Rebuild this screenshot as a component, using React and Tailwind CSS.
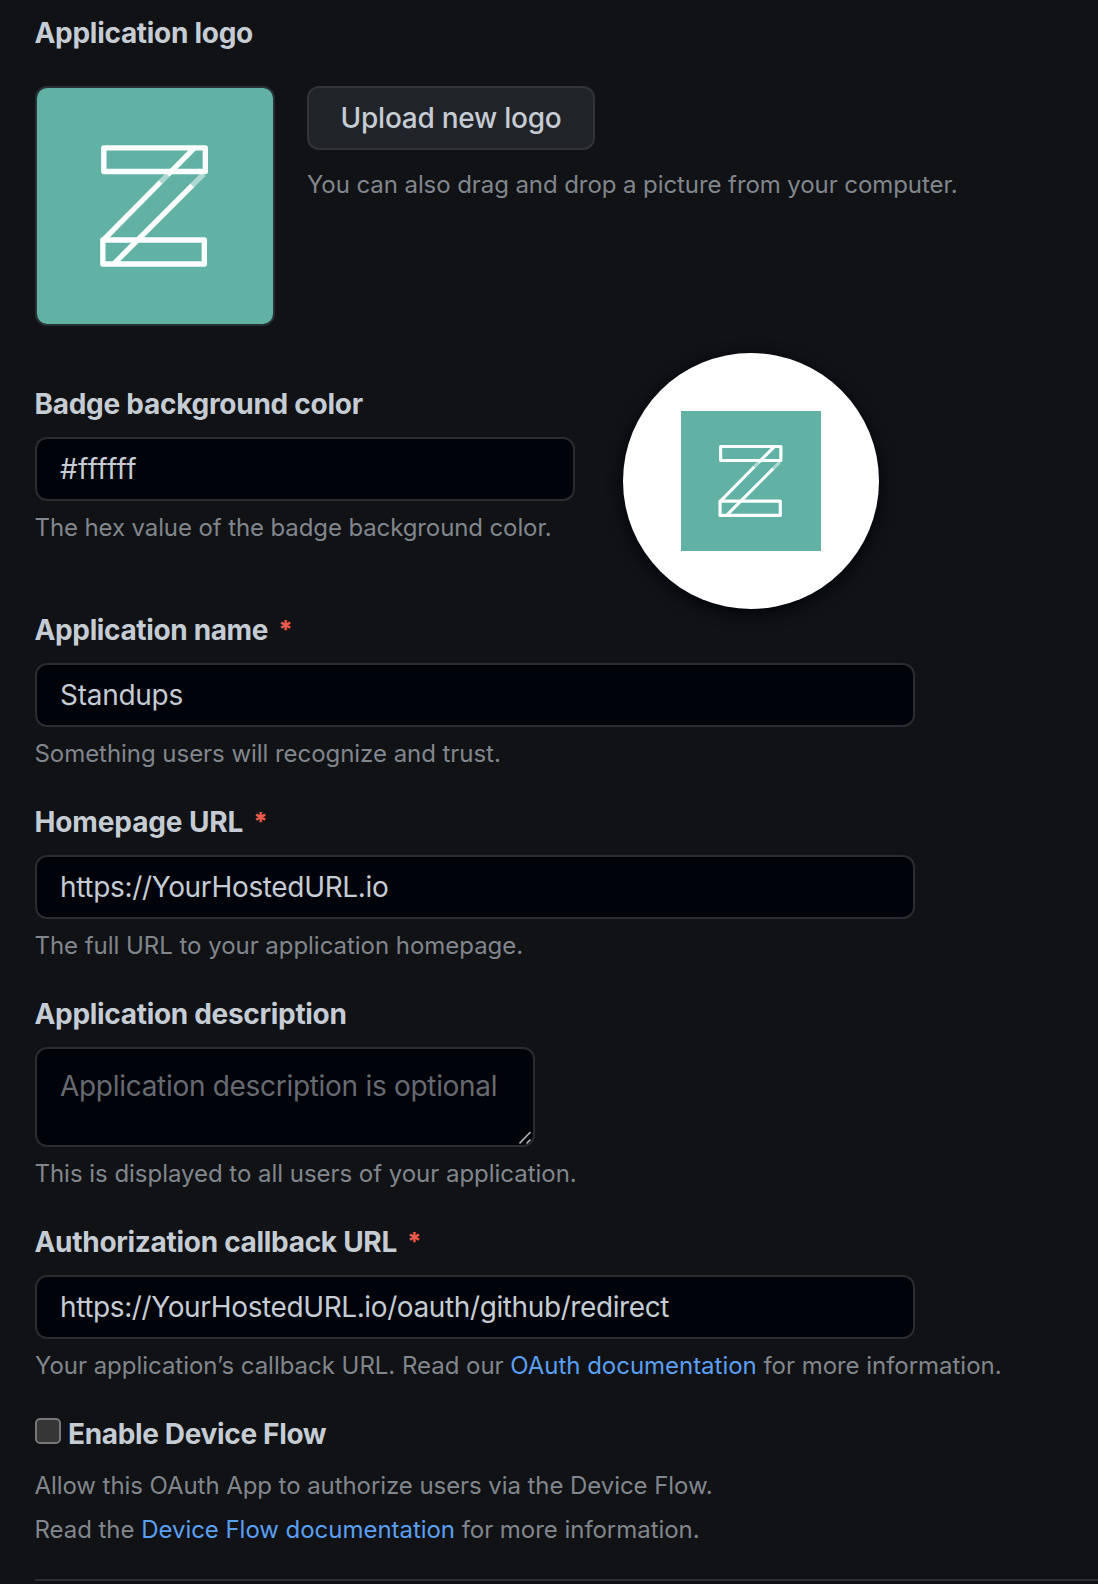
import React from "react";

function ZLogo({ className }) {
  return (
    <svg viewBox="111 264 708 708" className={className} fill="none" aria-hidden="true">
      <rect x="111" y="264" width="708" height="708" fill="#61b1a5" />
      <g stroke="#fafffd" strokeWidth="16" strokeLinejoin="round">
        <rect x="311.5" y="443.5" width="304.5" height="71" />
        <rect x="308.5" y="720" width="304.5" height="72" />
        <path d="M582 445 L503 525 M482 546 L312 718" />
        <path d="M577 556 L343 790" />
      </g>
      <path d="M503 525 L482 546 M611 522 L577 556" stroke="#fafffd" strokeOpacity="0.5" strokeWidth="16" />
    </svg>
  );
}

function Label({ children, className, required }) {
  return (
    <label className={`block h-[42px] whitespace-nowrap text-[28px] font-[650] leading-[43px] text-[#c5ccd4] ${className}`}>
      {children}
      {required && <span className="ml-[10px] align-[2px] text-[25px] font-extrabold leading-none tracking-normal text-[#ec5a4b]">*</span>}
    </label>
  );
}

function Field({ value, className, textClass }) {
  return (
    <div className={`flex h-16 items-center rounded-xl border-2 border-[#2b2c31] bg-[#01030b] px-[23px] text-[28px] text-[#c5ccd4] ${className}`}>
      <span className={`whitespace-nowrap ${textClass}`}>{value}</span>
    </div>
  );
}

function Note({ children, className }) {
  return (
    <p className={`h-9 whitespace-nowrap text-[24px] leading-[38px] text-[#81868d] ${className}`}>{children}</p>
  );
}

function Link({ children, className }) {
  return <a href="#" className={`text-[#5b9ff2] ${className}`}>{children}</a>;
}

export default function App() {
  return (
    <main className="h-[1584px] w-[1098px] overflow-hidden bg-[#101216] pl-[35px] pt-3 font-['Inter',sans-serif]">
      <Label className="-ml-[0.5px] tracking-[-0.29px]">Application logo</Label>
      <div className="mt-8 flex gap-8">
        <div className="size-60 overflow-hidden rounded-xl border-2 border-[#273036]">
          <ZLogo className="size-full" />
        </div>
        <div>
          <button className="flex h-16 w-72 items-center justify-center whitespace-nowrap rounded-xl border-2 border-[#303337] bg-[#202328] text-[28px] font-[550] tracking-[-0.26px] text-[#c5ccd4]">
            Upload new logo
          </button>
          <Note className="mt-4 tracking-[-0.08px]">You can also drag and drop a picture from your computer.</Note>
        </div>
      </div>

      <div className="mt-[27px] flex h-64 gap-12">
        <div className="w-[540px] pt-[30px]">
          <Label className="-ml-[0.5px] tracking-[-0.27px]">Badge background color</Label>
          <Field className="mt-3" textClass="tracking-[0.35px]" value="#ffffff" />
          <Note className="-ml-[0.5px] mt-2 tracking-[-0.11px]">The hex value of the badge background color.</Note>
        </div>
        <div className="flex size-64 items-center justify-center rounded-full bg-white shadow-[0_4px_16px_#01040a]">
          <ZLogo className="size-[140px]" />
        </div>
      </div>

      <div className="flex flex-col gap-[30px]">
        <div>
          <Label required className="-ml-[0.5px] tracking-[-0.36px]">Application name</Label>
          <Field className="mt-3 w-[880px]" textClass="tracking-[-0.27px]" value="Standups" />
          <Note className="-ml-[0.5px] mt-2 tracking-[-0.045px]">Something users will recognize and trust.</Note>
        </div>
        <div>
          <Label required className="-ml-[0.5px] tracking-[-0.12px]">Homepage URL</Label>
          <Field className="mt-3 w-[880px]" textClass="tracking-[-0.34px]" value="https://YourHostedURL.io" />
          <Note className="-ml-[0.5px] mt-2 tracking-[-0.038px]">The full URL to your application homepage.</Note>
        </div>
        <div>
          <Label className="-ml-[0.5px] tracking-[-0.31px]">Application description</Label>
          <div className="relative mt-3 h-[100px] w-[500px] rounded-xl border-2 border-[#2b2c31] bg-[#01030b] px-[23px] pt-4 text-[28px] leading-[42px] tracking-[-0.3px] text-[#676a71]">
            <span className="whitespace-nowrap">Application description is optional</span>
            <svg viewBox="0 0 14 14" className="absolute bottom-0 right-0 size-[14px]" fill="none" stroke="#b4b5b8" strokeWidth="1.6">
              <path d="M0.5 12.5 L11.5 1 M7.5 12.5 L11.5 8.5" />
            </svg>
          </div>
          <Note className="-ml-[0.5px] mt-2 tracking-[-0.032px]">This is displayed to all users of your application.</Note>
        </div>
        <div>
          <Label required className="-ml-[0.5px] tracking-[-0.3px]">Authorization callback URL</Label>
          <Field className="mt-3 w-[880px]" textClass="tracking-[-0.394px]" value="https://YourHostedURL.io/oauth/github/redirect" />
          <Note className="mt-2 tracking-[-0.03px]">
            Your application’s callback URL. Read our <Link>OAuth documentation</Link> for more information.
          </Note>
        </div>
        <div>
          <div className="flex h-[42px] items-start">
            <span className="mt-[5px] size-[26px] rounded-[5px] border-2 border-[#77777a] bg-[#363636]" />
            <Label className="ml-[7px] tracking-[-0.34px]">Enable Device Flow</Label>
          </div>
          <div className="mt-2 flex flex-col gap-2 pt-1">
            <Note className="-ml-[0.5px] tracking-[-0.07px]">Allow this OAuth App to authorize users via the Device Flow.</Note>
            <Note className="-ml-[0.5px] tracking-[-0.04px]">
              Read the <Link>Device Flow documentation</Link> for more information.
            </Note>
          </div>
        </div>
      </div>
      <hr className="mt-8 border-0 border-t-2 border-[#2b2c31]" />
    </main>
  );
}
